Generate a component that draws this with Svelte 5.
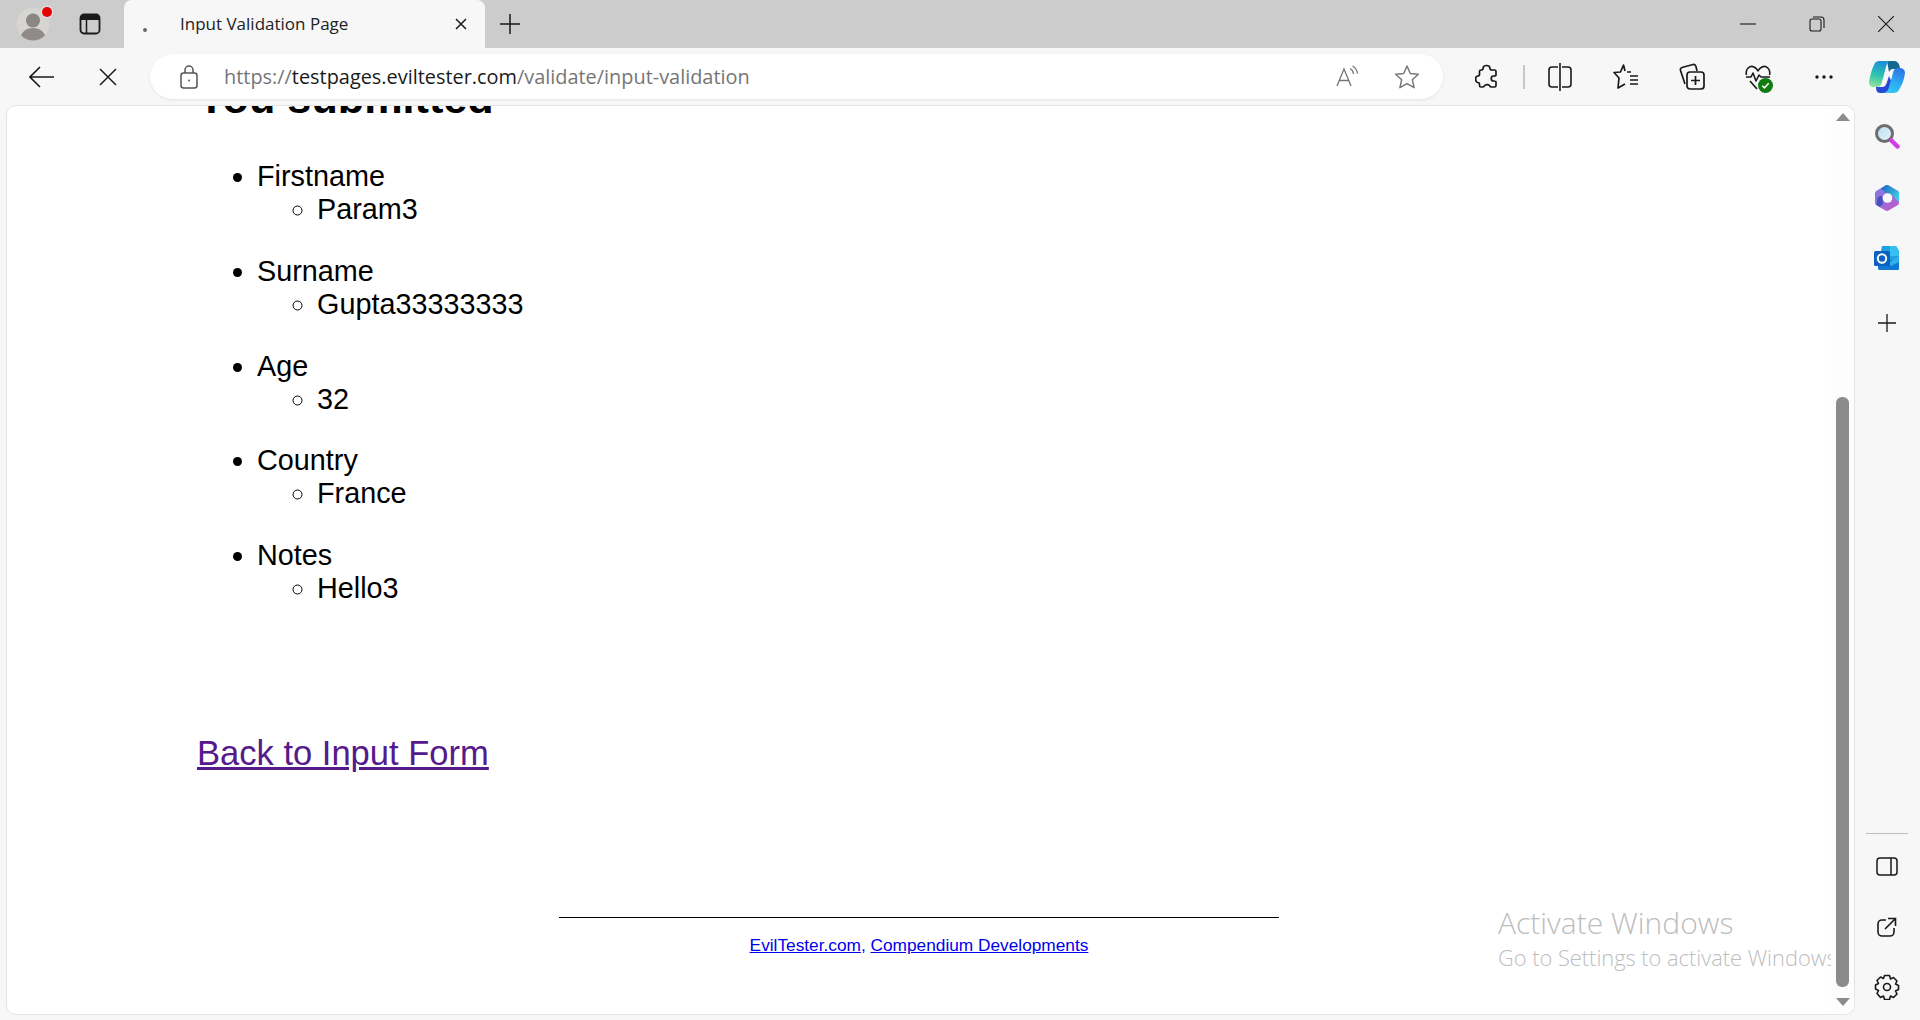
<script lang="ts">
	const fields = [
		{ label: 'Firstname', value: 'Param3' },
		{ label: 'Surname', value: 'Gupta33333333' },
		{ label: 'Age', value: '32' },
		{ label: 'Country', value: 'France' },
		{ label: 'Notes', value: 'Hello3' }
	];
</script>

<div class="browser">
	<div class="tabstrip">
		<div class="slot profile">
			<svg width="34" height="34" viewBox="0 0 34 34">
				<defs>
					<clipPath id="avatarClip"><circle cx="17" cy="17" r="16.500" /></clipPath>
				</defs>
				<circle cx="17" cy="17" r="16.500" fill="#d6d5d2" />
				<g clip-path="url(#avatarClip)">
					<circle cx="17" cy="13.500" r="7" fill="#8a8683" />
					<path d="M4 34c0-9 6-13 13-13s13 4 13 13z" fill="#8f8b88" />
				</g>
			</svg>
			<span class="dot"></span>
		</div>
		<div class="slot tabs-btn">
			<svg width="22" height="22" viewBox="0 0 22 22" fill="none" stroke="#1a1a1a" stroke-width="1.800">
				<rect x="1.500" y="1.500" width="19" height="19" rx="3.500" />
				<path d="M1.500 6.500V5a3.500 3.500 0 0 1 3.500-3.500h12A3.500 3.500 0 0 1 20.500 5v1.500z" fill="#1a1a1a" stroke-width="1" />
				<path d="M7.500 6.500v14" stroke-width="1.500" />
			</svg>
		</div>
		<div class="tab">
			<span class="favicon"></span>
			<span class="tab-title">Input Validation Page</span>
			<svg class="tab-close" width="14" height="14" viewBox="0 0 14 14" stroke="#1a1a1a" stroke-width="1.500">
				<path d="M2 2l10 10M12 2L2 12" />
			</svg>
		</div>
		<div class="slot new-tab">
			<svg width="20" height="20" viewBox="0 0 20 20" stroke="#1a1a1a" stroke-width="1.500">
				<path d="M10 0v20M0 10h20" />
			</svg>
		</div>
		<div class="grow"></div>
		<div class="win">
			<svg width="16" height="16" viewBox="0 0 16 16" stroke="#1a1a1a" stroke-width="1.100"><path d="M0 8h16" /></svg>
		</div>
		<div class="win">
			<svg width="16" height="16" viewBox="0 0 16 16" fill="none" stroke="#1a1a1a" stroke-width="1.100">
				<rect x="1" y="3" width="11" height="12" rx="2" />
				<path d="M4 1h8a3 3 0 0 1 3 3v8" />
			</svg>
		</div>
		<div class="win">
			<svg width="16" height="16" viewBox="0 0 16 16" stroke="#1a1a1a" stroke-width="1.100"><path d="M0 0l16 16M16 0L0 16" /></svg>
		</div>
	</div>

	<div class="toolbar">
		<div class="tool back">
			<svg width="26" height="22" viewBox="0 0 26 22" fill="none" stroke="#1a1a1a" stroke-width="1.600">
				<path d="M1 11h24M11 1L1 11l10 10" />
			</svg>
		</div>
		<div class="tool stop">
			<svg width="18" height="18" viewBox="0 0 18 18" stroke="#1a1a1a" stroke-width="1.500"><path d="M1 1l16 16M17 1L1 17" /></svg>
		</div>
		<div class="address">
			<svg class="lock" width="18" height="24" viewBox="0 0 18 24" fill="none" stroke="#555" stroke-width="1.500">
				<rect x="1" y="8" width="16" height="15" rx="2.500" />
				<path d="M5 8V5a4 4 0 0 1 8 0v3" />
				<circle cx="9" cy="15.500" r="1" fill="#555" stroke="none" />
			</svg>
			<span class="url">https://<b>testpages.eviltester.com</b>/validate/input-validation</span>
			<div class="grow"></div>
			<div class="addr-tool">
				<svg width="24" height="24" viewBox="0 0 24 24" fill="none" stroke="#777" stroke-width="1.300">
					<path d="M2 21L9 4l7 17M4.500 15.500h9" />
					<path d="M15 3.500c2 1 3.200 3 3.600 5.500M17.500 1c3 1.500 4.500 4 5 7.500" />
				</svg>
			</div>
			<div class="addr-tool">
				<svg width="26" height="26" viewBox="0 0 26 26" fill="none" stroke="#777" stroke-width="1.500" stroke-linejoin="round">
					<path d="M13 2l3.300 7.500 8 .8-6 5.400 1.800 8L13 19.600 5.900 23.700l1.800-8-6-5.400 8-.8z" />
				</svg>
			</div>
		</div>
		<div class="tool ext">
			<svg width="24" height="26" viewBox="0 0 24 26" fill="none" stroke="#1a1a1a" stroke-width="1.700" stroke-linejoin="round">
				<path d="M8 4.500c0-4 7-4 7 0 0 1 1 1.500 2 1.500h2.500c1 0 1.500 .7 1.500 1.500V11c0 1-1.500 1-2.500 1-3 0-3 5 0 5 1 0 2.500 0 2.500 1v3.500c0 1-.7 1.500-1.500 1.500H16c-1 0-1 -1-1.500-1.500-1.500-1.500-4-1-5 .3-.5 .7-1 1.200-2 1.200H6c-1 0-1.500-.7-1.500-1.500V20c0-1-1-1.500-2-1.500-2.500-1-2.500-6 0-6.500 1 0 2-.5 2-1.500V7.500C4.500 6.500 5 6 6 6c1 0 2-.5 2-1.500z" />
			</svg>
		</div>
		<span class="sep"></span>
		<div class="tool wide">
			<svg width="24" height="28" viewBox="0 0 24 28" fill="none" stroke="#1a1a1a" stroke-width="1.600">
				<path d="M10 4H4a3 3 0 0 0-3 3v14a3 3 0 0 0 3 3h6M14 4h6a3 3 0 0 1 3 3v14a3 3 0 0 1-3 3h-6M12 0v28" />
			</svg>
		</div>
		<div class="tool wide">
			<svg width="26" height="28" viewBox="0 0 26 28" fill="none" stroke="#1a1a1a" stroke-width="1.700" stroke-linejoin="round">
				<path d="M12 8L10.500 2 7.500 9l-6.500 .5 5 5.500L5 25l7-4" />
				<path d="M14 9h4M17 13h8M17 17h8M17 21h8" />
			</svg>
		</div>
		<div class="tool wide">
			<svg width="26" height="28" viewBox="0 0 26 28" fill="none" stroke="#1a1a1a" stroke-width="1.700" stroke-linejoin="round">
				<path d="M6 21L1.500 7.500C1 6 1.800 5 3 4.500L14 1.500c1.500-.4 2.500 .5 3 2L18 8" />
				<rect x="8" y="9" width="17" height="17" rx="3" />
				<path d="M16.500 13v9M12 17.500h9" />
			</svg>
		</div>
		<div class="tool wide health">
			<svg width="26" height="26" viewBox="0 0 26 26" fill="none" stroke="#1a1a1a" stroke-width="1.600" stroke-linejoin="round">
				<path d="M1.500 11C0 5 5 1 9 3c2 1 3 2 4 4 1-2 2-3 4-4 4-2 9 2 7.500 8" />
				<path d="M1 13h5l2-4 3 8 3-6 2 2h9" />
				<path d="M5 17l7 8" />
			</svg>
			<svg class="badge" width="15" height="15" viewBox="0 0 14 14">
				<circle cx="7" cy="7" r="7" fill="#107c10" />
				<path d="M4 7.200l2 2 4-4.200" fill="none" stroke="#fff" stroke-width="1.400" />
			</svg>
		</div>
		<div class="tool wide">
			<svg width="20" height="6" viewBox="0 0 20 6" fill="#1a1a1a">
				<circle cx="3" cy="3" r="1.700" />
				<circle cx="10" cy="3" r="1.700" />
				<circle cx="17" cy="3" r="1.700" />
			</svg>
		</div>
		<div class="tool copilot">
			<svg width="38" height="34" viewBox="0 0 38 34">
				<defs>
					<linearGradient id="cpA" x1="0.500" y1="0" x2="0.300" y2="1">
						<stop offset="0" stop-color="#1c8fd6" />
						<stop offset="0.550" stop-color="#2fc4ae" />
						<stop offset="1" stop-color="#8fe39a" />
					</linearGradient>
					<linearGradient id="cpB" x1="0.800" y1="0" x2="0.300" y2="1">
						<stop offset="0" stop-color="#2f6fe8" />
						<stop offset="0.500" stop-color="#2aa8f0" />
						<stop offset="1" stop-color="#35c8f2" />
					</linearGradient>
				</defs>
				<path d="M19 1h7c3 0 5 2 5.500 5l.5 3h-7c-2 0-3 1-4 3z" fill="#12688f" />
				<path d="M11 1h12c-3 0-4 2-5 6l-4 15c-1 4-3 5-6 5H5c-3 0-4-3-4-5C2 15 4 9 6 5c1-3 3-4 5-4z" fill="url(#cpA)" />
				<path d="M8 27h6c3 0 4-2 5-5l2-6 4 9c-2 6-5 8-9 8h-4c-3 0-4-3-4-6z" fill="#2748d6" />
				<path d="M31 8c4 0 6 2 6 5-1 7-3 12-5.500 16-1.500 3-3.500 4-6.500 4H13c5 0 7-2 8-6l4-14c1-4 2-5 6-5z" fill="url(#cpB)" />
			</svg>
		</div>
	</div>

	<div class="main">
		<div class="page">
			<div class="viewport">
				<div class="content">
					<h1>You submitted</h1>
					<ul class="outer">
						{#each fields as field}
							<li>
								{field.label}
								<ul class="inner">
									<li>{field.value}</li>
								</ul>
							</li>
						{/each}
					</ul>
					<a class="back-link" href="#back">Back to Input Form</a>
				</div>
				<div class="footer">
					<hr />
					<p><a href="#eviltester">EvilTester.com</a>, <a href="#compendium">Compendium Developments</a></p>
				</div>
				<div class="watermark">
					<div class="wm-title">Activate Windows</div>
					<div class="wm-sub">Go to Settings to activate Windows.</div>
				</div>
			</div>
			<div class="scrollbar">
				<span class="arrow up"></span>
				<span class="thumb"></span>
				<span class="arrow down"></span>
			</div>
		</div>

		<div class="sidebar">
			<div class="side-item">
				<svg width="26" height="26" viewBox="0 0 26 26" fill="none">
					<defs>
						<linearGradient id="lens" x1="0" y1="0" x2="1" y2="1">
							<stop offset="0" stop-color="#b9dcf5" />
							<stop offset="1" stop-color="#eaf5fc" />
						</linearGradient>
					</defs>
					<circle cx="10.500" cy="10.500" r="8" fill="url(#lens)" stroke="#6d6d6d" stroke-width="3" />
					<path d="M17.500 17.500l6 6" stroke="#d63be8" stroke-width="4.500" stroke-linecap="round" />
				</svg>
			</div>
			<div class="side-item m365">
				<svg width="26" height="28" viewBox="0 0 26 28">
					<defs>
						<linearGradient id="m3A" x1="0" y1="0" x2="1" y2="0.700">
							<stop offset="0" stop-color="#1b5fc0" />
							<stop offset="1" stop-color="#39d2e6" />
						</linearGradient>
						<linearGradient id="m3B" x1="0" y1="0" x2="1" y2="1">
							<stop offset="0" stop-color="#7f7be6" />
							<stop offset="1" stop-color="#c05ac8" />
						</linearGradient>
					</defs>
					<path d="M11.500 1.500q1.500-.8 3 0l9 5.200q1.500 .8 1.500 2.500v9.600q0 1.700-1.500 2.500l-9 5.200q-1.500 .8-3 0l-9-5.200q-1.500-.8-1.500-2.500V9.200q0-1.700 1.500-2.500z" fill="url(#m3B)" />
					<path d="M7 4.500l4.500-3q1.500-.8 3 0l9 5.200q1.500 .8 1.500 2.500V18l-5-5c-2-3-5-4-8-4z" fill="url(#m3A)" />
					<path d="M8 12l1 8-3 3-3.500-2 1-7c1-2 3-2 4.500-2z" fill="#2c4fb8" opacity="0.800" />
					<circle cx="13.500" cy="14" r="4.800" fill="#f7f7f7" />
				</svg>
			</div>
			<div class="side-item">
				<svg width="26" height="26" viewBox="0 0 26 26">
					<path d="M8 1h14l3 5v18l-1 1H5V16z" fill="#1fa0e3" />
					<path d="M16 1h6l3 5v5h-9z" fill="#35c0ef" />
					<path d="M4 15h21v9l-1 1H5l-1-1z" fill="#0f78d4" />
					<path d="M14 18l11-7v6l-8 4z" fill="#2fb0ea" />
					<rect x="0" y="6" width="16" height="15" rx="1.500" fill="#0b62c0" />
					<circle cx="8" cy="13.500" r="4.200" fill="none" stroke="#fff" stroke-width="2" />
				</svg>
			</div>
			<div class="side-item plus">
				<svg width="20" height="20" viewBox="0 0 20 20" stroke="#1a1a1a" stroke-width="1.300"><path d="M10 1v18M1 10h18" /></svg>
			</div>
			<div class="grow"></div>
			<div class="side-line"></div>
			<div class="side-item">
				<svg width="22" height="20" viewBox="0 0 22 20" fill="none" stroke="#1a1a1a" stroke-width="1.500">
					<rect x="1" y="1" width="20" height="17" rx="3" />
					<path d="M15 1v17" />
				</svg>
			</div>
			<div class="side-item">
				<svg width="20" height="20" viewBox="0 0 20 20" fill="none" stroke="#1a1a1a" stroke-width="1.600">
					<path d="M9 3H5a4 4 0 0 0-4 4v8a4 4 0 0 0 4 4h8a4 4 0 0 0 4-4v-4" />
					<path d="M8 12L18 2M11 1.500h7.500V9" />
				</svg>
			</div>
			<div class="side-item">
				<svg width="26" height="26" viewBox="0 0 26 26" fill="none" stroke="#1a1a1a" stroke-width="1.600" stroke-linejoin="round">
					<path d="M10.500 1.500h5l1 3.500 3-1.500 3.500 3.500-1.500 3 3 1.500v4l-3 1.500 1.500 3-3.500 3.500-3-1.500-1 3.500h-5l-1-3.500-3 1.500L3 19.500l1.500-3-3-1.500v-4l3-1.500L3 6.500 6.500 3l3 1.500z" />
					<circle cx="13" cy="13" r="3.500" />
				</svg>
			</div>
		</div>
	</div>
</div>

<style>
	:global(body) {
		margin: 0;
		background: #f7f7f7;
	}

	.browser {
		display: flex;
		flex-direction: column;
		height: 1020px;
		overflow: hidden;
		font-family: 'Open Sans', 'Liberation Sans', sans-serif;
	}

	.grow {
		flex: 1;
	}

	/* tab strip */
	.tabstrip {
		display: flex;
		align-items: stretch;
		height: 48px;
		background: #cccccc;
		flex: none;
	}

	.slot {
		display: flex;
		align-items: center;
		justify-content: center;
	}

	.profile {
		width: 66px;
		position: relative;
	}

	.dot {
		position: absolute;
		top: 7px;
		left: 42px;
		width: 10px;
		height: 10px;
		border-radius: 50%;
		background: #e60000;
		box-shadow: 0 0 0 1.500px #dcdcdc;
	}

	.tabs-btn {
		width: 48px;
		margin-right: 10px;
	}

	.tab {
		display: flex;
		align-items: center;
		width: 361px;
		box-sizing: border-box;
		background: #f7f7f7;
		border-radius: 8px 8px 0 0;
	}

	.favicon {
		width: 4px;
		height: 4px;
		margin: 12px 33px 0 19px;
		border-radius: 50%;
		background: #666;
	}

	.tab-title {
		flex: 1;
		padding-bottom: 2px;
		font-size: 17px;
		color: #222;
		white-space: nowrap;
	}

	.tab-close {
		margin-right: 17px;
	}

	.new-tab {
		width: 50px;
	}

	.win {
		display: flex;
		align-items: center;
		justify-content: center;
		width: 69px;
	}

	/* toolbar */
	.toolbar {
		display: flex;
		align-items: center;
		height: 57px;
		flex: none;
		background: #f7f7f7;
	}

	.tool {
		display: flex;
		align-items: center;
		justify-content: center;
		height: 46px;
		flex: none;
	}

	.back {
		width: 60px;
		margin-left: 12px;
	}

	.stop {
		width: 72px;
		margin-right: 6px;
	}

	.address {
		display: flex;
		align-items: center;
		width: 1293px;
		height: 45px;
		flex: none;
		box-sizing: border-box;
		padding: 0 6px 0 30px;
		border-radius: 23px;
		background: #fff;
		box-shadow: 0 1px 3px rgba(0, 0, 0, 0.08);
	}

	.lock {
		margin-right: 26px;
	}

	.url {
		font-size: 19.900px;
		color: #757575;
		white-space: nowrap;
	}

	.url b {
		font-weight: 400;
		color: #1a1a1a;
	}

	.addr-tool {
		display: flex;
		align-items: center;
		justify-content: center;
		width: 60px;
	}

	.ext {
		width: 54px;
		margin-left: 17px;
	}

	.sep {
		width: 2px;
		height: 24px;
		margin: 0 2px 0 9px;
		background: #c8c8c8;
	}

	.wide {
		width: 66px;
	}

	.health {
		position: relative;
	}

	.badge {
		position: absolute;
		left: 33px;
		top: 24px;
	}

	.copilot {
		width: 60px;
	}

	/* page area */
	.main {
		display: flex;
		flex: 1;
		min-height: 0;
	}

	.page {
		display: flex;
		flex: none;
		width: 1849px;
		height: 910px;
		margin-left: 6px;
		box-sizing: border-box;
		border: 1px solid #e4e4e4;
		border-radius: 10px;
		overflow: hidden;
		background: #fff;
	}

	.viewport {
		position: relative;
		flex: 1;
		overflow: hidden;
		font-family: 'Liberation Sans', Arial, sans-serif;
		color: #000;
	}

	.content {
		margin-top: -32px;
		padding-left: 190px;
	}

	h1 {
		margin: 0 0 37px;
		font-size: 43.200px;
		font-weight: 700;
	}

	.outer {
		margin: 0;
		padding-left: 60px;
		font-size: 28.800px;
	}

	.outer > li {
		margin-bottom: 28.800px;
	}

	.inner {
		margin: 0;
		padding-left: 60px;
		list-style: circle;
	}

	.back-link {
		display: inline-block;
		margin-top: 100px;
		font-size: 34.560px;
		color: #551a8b;
	}

	.footer {
		margin-top: 144px;
		text-align: center;
	}

	hr {
		width: 720px;
		height: 1px;
		margin: 0 auto;
		border: 0;
		background: #000;
	}

	.footer p {
		margin: 17px 0 0;
		font-size: 17.280px;
		color: #0000ee;
	}

	.footer a {
		color: #0000ee;
	}

	.watermark {
		position: absolute;
		left: 1491px;
		top: 796px;
		width: 360px;
		font-family: 'Open Sans', sans-serif;
		color: #bdbdbd;
		white-space: nowrap;
	}

	.wm-title {
		font-size: 30px;
		font-weight: 300;
	}

	.wm-sub {
		margin-top: 0;
		font-size: 21.800px;
		font-weight: 300;
	}

	.scrollbar {
		position: relative;
		display: flex;
		flex-direction: column;
		align-items: center;
		flex: none;
		width: 23px;
		background: #fdfdfd;
	}

	.arrow {
		flex: none;
		width: 0;
		height: 0;
		border-left: 7.500px solid transparent;
		border-right: 7.500px solid transparent;
	}

	.up {
		margin-top: 7px;
		border-bottom: 8px solid #8b8b8b;
	}

	.thumb {
		flex: none;
		width: 13px;
		height: 590px;
		margin-top: 276px;
		border-radius: 6px;
		background: #8b8b8b;
	}

	.down {
		margin-top: 11px;
		border-top: 8px solid #8b8b8b;
	}

	/* edge sidebar */
	.sidebar {
		display: flex;
		flex-direction: column;
		align-items: center;
		flex: 1;
		padding: 1px 2px 3px 0;
	}

	.side-item {
		display: flex;
		align-items: center;
		justify-content: center;
		width: 100%;
		height: 60px;
		flex: none;
	}

	.m365 {
		margin-top: 2px;
	}

	.plus {
		margin-top: 5px;
	}

	.side-line {
		width: 42px;
		height: 1px;
		margin-bottom: 3px;
		background: #bdbdbd;
	}
</style>
